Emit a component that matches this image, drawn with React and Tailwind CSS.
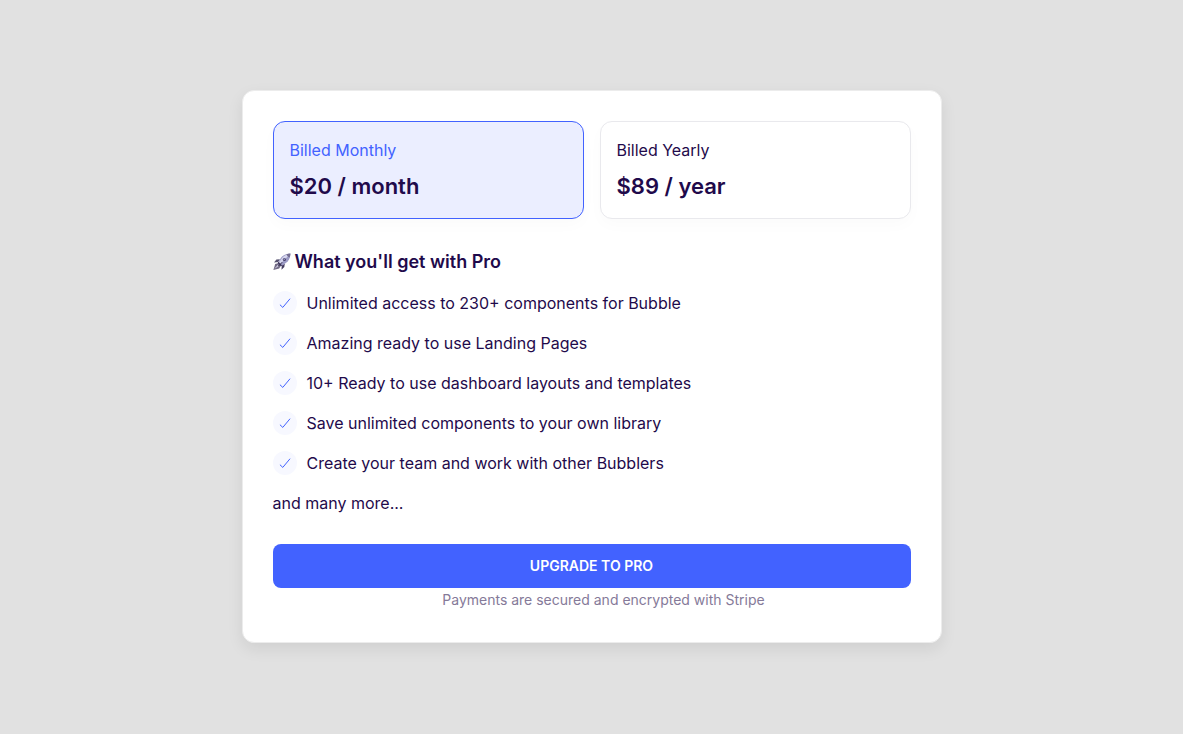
import React, { useState } from 'react'

const plans = [
    { id: 'monthly', label: 'Billed Monthly', price: '$20 / month' },
    { id: 'yearly', label: 'Billed Yearly', price: '$89 / year' },
]

const features = [
    'Unlimited access to 230+ components for Bubble',
    'Amazing ready to use Landing Pages',
    '10+ Ready to use dashboard layouts and templates',
    'Save unlimited components to your own library',
    'Create your team and work with other Bubblers',
]

function Rocket() {
    return (
        <svg viewBox="0 0 18 18" className="h-[18px] w-[18px] shrink-0" aria-hidden="true">
            <path d="M7 6.2 3.4 6.6 1 9.4l4.2-.3z" fill="#55506f" />
            <path d="M11.8 10.6l-.5 3.5-2.8 2.7.3-4.4z" fill="#453d60" />
            <path d="M5.2 10.2 2.2 11 .4 16.9l5.8-1.5 1.6-2.7z" fill="#716a85" />
            <path d="M4.8 11.8 1.4 15.8l4-2.4z" fill="#c9c4dc" />
            <path d="M17.4.6c-4.4.1-7.5 1.6-9.6 4.4l-3.2 5.2 3.2 3.1 5-3.2C15.8 8 17.3 5 17.4.6z" fill="#9c9bc6" />
            <path d="M17.4.6C13.5 1.3 10.5 3 8.5 5.7l-3.3 4.8 1.3 1.2 6-6z" fill="#d6d6ee" />
            <path d="M17.4.6c-1.5 0-2.8.2-4 .6.5 1.6 1.7 2.8 3.3 3.3.4-1.2.7-2.5.7-3.9z" fill="#746e92" />
            <path d="M4.6 10.2l3.2 3.1 1.3-.9-3.6-3.6z" fill="#3d3459" />
            <circle cx="11.4" cy="6.5" r="1.6" fill="#48416b" />
            <circle cx="11.2" cy="6.3" r=".7" fill="#a9acd8" />
            <path d="M9.2 9.2 5.6 13" stroke="#37304f" strokeWidth="1" />
        </svg>
    )
}

function Check() {
    return (
        <span className="flex h-6 w-6 shrink-0 items-center justify-center rounded-full bg-[#f7f8ff]">
            <svg viewBox="0 0 12 12" className="h-3 w-3" fill="none" stroke="#4262ff" aria-hidden="true">
                <path strokeLinecap="round" strokeLinejoin="round" d="M1.2 8 3.8 10.4 10.8 2" />
            </svg>
        </span>
    )
}

function App() {
    const [plan, setPlan] = useState('monthly')

    return (
        <div className="flex min-h-screen items-center justify-center bg-[#e1e1e1] px-6 pt-6 pb-[26px] font-['Inter',sans-serif] text-[#1f0a4b]">
            <main className="w-full max-w-[700px] rounded-xl border border-[#ececec] bg-white px-[30px] pt-[30px] pb-8 shadow-[0_6px_16px_rgba(0,0,0,0.08)]">
                {/* Plans */}
                <fieldset aria-label="Billing period" className="grid gap-4 sm:grid-cols-2">
                    {plans.map((item) => (
                        <label
                            key={item.id}
                            className="cursor-pointer rounded-xl border border-[#e9e9ed] bg-white p-4 shadow-[0_6px_16px_rgba(0,0,0,0.02)] has-checked:border-[#4262ff] has-checked:bg-[#ebeeff]"
                        >
                            <input
                                type="radio"
                                name="plan"
                                value={item.id}
                                checked={plan === item.id}
                                onChange={() => setPlan(item.id)}
                                className="peer sr-only"
                            />
                            <span className="block text-base leading-6 peer-checked:text-[#4262ff]">{item.label}</span>
                            <span className="mt-2 block text-[22px] font-semibold leading-8">{item.price}</span>
                        </label>
                    ))}
                </fieldset>

                {/* Features */}
                <h2 className="mt-[31px] flex items-center gap-1 text-lg font-semibold leading-6">
                    <Rocket />
                    What you'll get with Pro
                </h2>
                <ul className="mt-[17px] flex flex-col gap-4">
                    {features.map((feature) => (
                        <li key={feature} className="flex items-center gap-[10px] text-base leading-6">
                            <Check />
                            {feature}
                        </li>
                    ))}
                </ul>
                <p className="mt-4 text-base leading-6">and many more...</p>

                {/* Checkout */}
                <button
                    type="button"
                    className="mt-[29px] h-11 w-full cursor-pointer rounded-lg bg-[#4262ff] text-sm font-semibold text-white transition hover:bg-[#3452e8]"
                >
                    UPGRADE TO PRO
                </button>
                <p className="mt-[2px] pl-6 text-center text-sm leading-5 text-[#857a99]">
                    Payments are secured and encrypted with Stripe
                </p>
            </main>
        </div>
    )
}

export default App
